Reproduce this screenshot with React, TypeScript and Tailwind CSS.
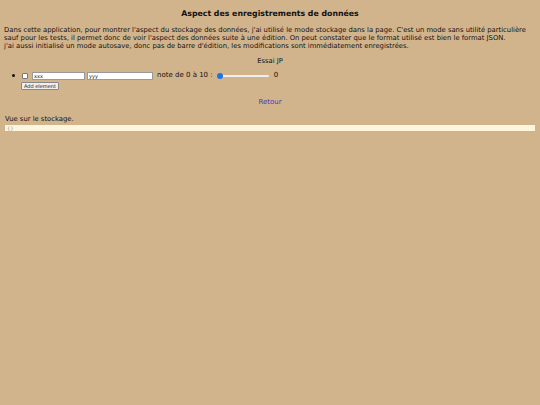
export default function App() {
  return (
    <div className="min-h-[405px] w-[540px] bg-[#d2b48c] font-['DejaVu_Sans',sans-serif] text-[#111]">
      <h1 className="pt-[8px] text-center text-[7.8px] font-bold leading-[11px]">
        Aspect des enregistrements de données
      </h1>

      <p className="mt-[7px] whitespace-nowrap px-[4px] text-[6.8px] leading-[8px]">
        Dans cette application, pour montrer l'aspect du stockage des données, j'ai utilisé le mode stockage dans la page. C'est un mode sans utilité particulière
        <br />
        sauf pour les tests, il permet donc de voir l'aspect des données suite à une édition. On peut constater que le format utilisé est bien le format JSON.
        <br />
        j'ai aussi initialisé un mode autosave, donc pas de barre d'édition, les modifications sont immédiatement enregistrées.
      </p>

      <div className="mt-[7px] text-center text-[6.8px] leading-[8px]">Essai JP</div>

      <ul className="mt-[6px] pl-[12px] text-[7px]">
        <li className="flex items-center leading-[9px]">
          <span className="h-[3px] w-[3px] rounded-full bg-[#111]" />
          <span className="ml-[7px] h-[6px] w-[6px] rounded-[1px] border border-[#777] bg-white" />
          <input
            readOnly
            value="xxx"
            className="ml-[4px] h-[8px] w-[53px] border border-[#999] bg-white px-[1px] text-[5px] leading-[6px] outline-none"
          />
          <input
            readOnly
            value="yyy"
            className="ml-[2px] h-[8px] w-[66px] border border-[#999] bg-white px-[1px] text-[5px] leading-[6px] outline-none"
          />
          <span className="ml-[4px]">note de 0 à 10 :</span>
          <span className="relative ml-[4px] flex h-[6px] w-[52px] items-center">
            <span className="h-[2px] w-full rounded-full bg-[#efefef]" />
            <span className="absolute left-0 h-[6px] w-[6px] rounded-full bg-[#1a73e8]" />
          </span>
          <span className="ml-[5px]">0</span>
        </li>
        <li className="mt-[1px] pl-[9px]">
          <button className="h-[8px] rounded-[1px] border border-[#888] bg-[#efefef] px-[2px] text-[5px] leading-[6px]">
            Add element
          </button>
        </li>
      </ul>

      <div className="mt-[6px] text-center text-[7px] leading-[9px]">
        <a className="text-[#4a36c4]">Retour</a>
      </div>

      <div className="mt-[8px] px-[5px] text-[6.8px] leading-[9px]">Vue sur le stockage.</div>

      <div className="mx-[5px] mt-[1px] h-[6px] bg-[#fdf5dc] px-[2px] text-[5px] leading-[6px] text-[#999]">
        {"{}"}
      </div>
    </div>
  );
}
